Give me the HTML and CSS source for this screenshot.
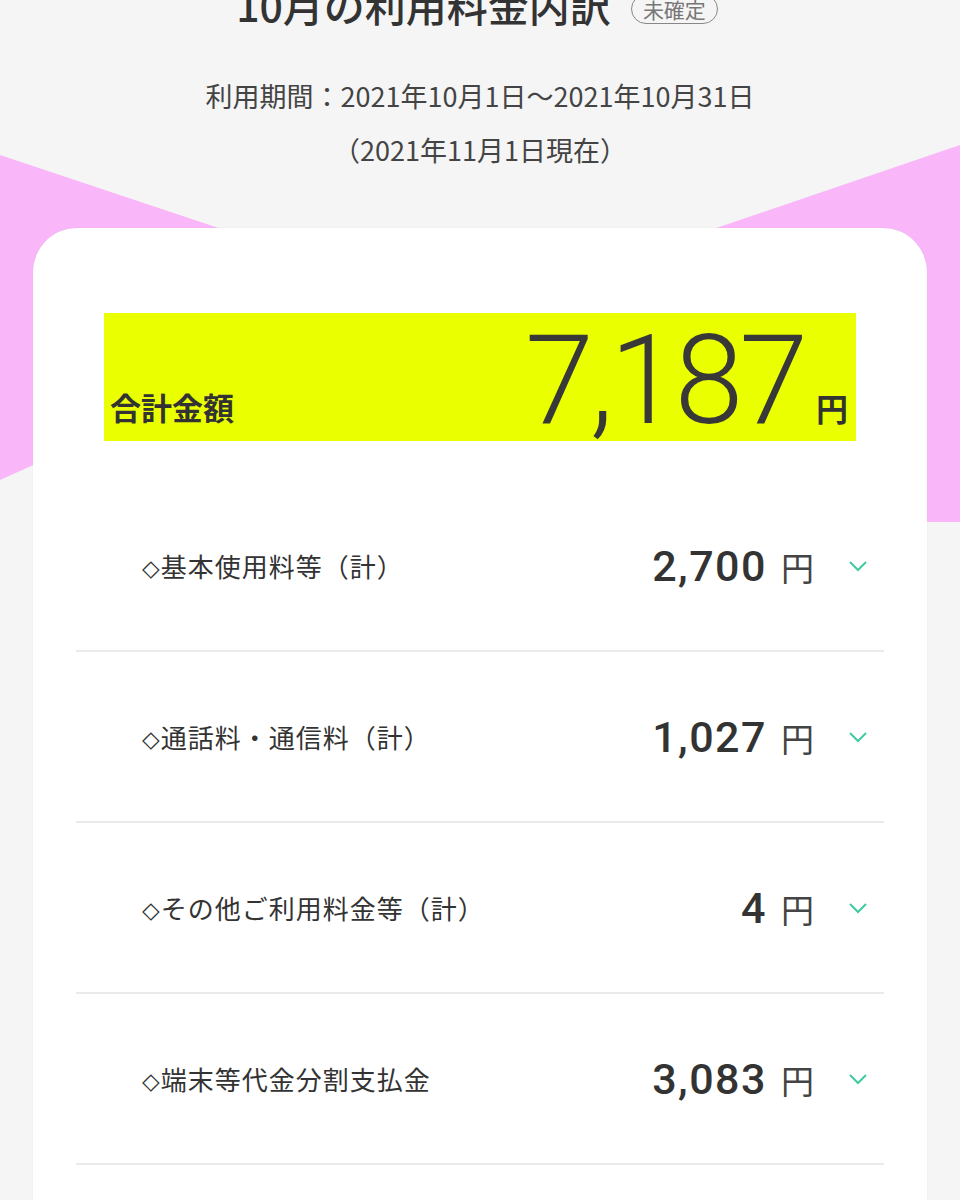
FILE: index.html
```html
<!DOCTYPE html>
<html lang="ja">
<head>
<meta charset="utf-8">
<link rel="stylesheet" href="styles.css">
</head>
<body>
<div class="page">
  <svg class="deco" width="960" height="1200" viewBox="0 0 960 1200" aria-hidden="true">
    <polygon points="0,155 470,312 960,145 960,522 930,522 40,462 0,480" fill="#f9b6f8"/>
  </svg>
  <header class="head">
    <h1 class="title">10月の利用料金内訳<span class="badge">未確定</span></h1>
    <p class="period">利用期間：2021年10月1日〜2021年10月31日</p>
    <p class="asof">（2021年11月1日現在）</p>
  </header>
  <main class="card">
    <div class="total">
      <span class="total-label">合計金額</span>
      <span class="total-amount"><span class="total-num">7,187</span><span class="total-yen">円</span></span>
    </div>
    <ul class="rows">
      <li class="row"><span class="label"><span class="dia">◇</span>基本使用料等（計）</span><span class="amt"><span class="num">2,700</span><span class="yen">円</span></span><svg class="chev" viewBox="0 0 20 12" width="20" height="12"><polyline points="2,2 10,10 18,2" fill="none" stroke="#3fcaa2" stroke-width="2"/></svg></li>
      <li class="row"><span class="label"><span class="dia">◇</span>通話料・通信料（計）</span><span class="amt"><span class="num">1,027</span><span class="yen">円</span></span><svg class="chev" viewBox="0 0 20 12" width="20" height="12"><polyline points="2,2 10,10 18,2" fill="none" stroke="#3fcaa2" stroke-width="2"/></svg></li>
      <li class="row"><span class="label"><span class="dia">◇</span>その他ご利用料金等（計）</span><span class="amt"><span class="num">4</span><span class="yen">円</span></span><svg class="chev" viewBox="0 0 20 12" width="20" height="12"><polyline points="2,2 10,10 18,2" fill="none" stroke="#3fcaa2" stroke-width="2"/></svg></li>
      <li class="row"><span class="label"><span class="dia">◇</span>端末等代金分割支払金</span><span class="amt"><span class="num">3,083</span><span class="yen">円</span></span><svg class="chev" viewBox="0 0 20 12" width="20" height="12"><polyline points="2,2 10,10 18,2" fill="none" stroke="#3fcaa2" stroke-width="2"/></svg></li>
      <li class="row empty"></li>
    </ul>
  </main>
</div>
</body>
</html>
```

FILE: styles.css
```css
* { box-sizing: border-box; }
html, body { margin: 0; padding: 0; }
body {
  background: #f5f5f5;
  font-family: "Noto Sans CJK JP", "Noto Sans", sans-serif;
  color: #333;
  width: 960px;
  height: 1200px;
  overflow: hidden;
}
.page { position: relative; width: 960px; display: flow-root; }
.deco { position: absolute; left: 0; top: 0; z-index: 0; }
.head { position: relative; z-index: 1; text-align: center; }
.title {
  margin: -24px 0 0;
  font-size: 41px;
  font-weight: 500;
  line-height: 56px;
  color: #333;
  padding-right: 6px;
}
.badge {
  display: inline-block;
  vertical-align: 4px;
  margin-left: 20px;
  font-size: 21px;
  font-weight: 400;
  line-height: 28px;
  color: #777;
  border: 1.5px solid #888;
  border-radius: 16px;
  padding: 0 11px;
}
.period {
  margin: 48px 0 0;
  font-size: 27px;
  line-height: 32px;
  color: #444;
}
.asof {
  margin: 22px 0 0;
  font-size: 27px;
  line-height: 32px;
  color: #444;
}
.card {
  position: relative;
  z-index: 1;
  margin: 62px 33px 0;
  background: #fff;
  border-radius: 44px 44px 0 0;
  padding: 85px 71px 0;
  height: 1000px;
  box-shadow: 0 0 2px rgba(0,0,0,0.06);
}
.total {
  background: #eaff00;
  height: 128px;
  display: flex;
  justify-content: space-between;
  align-items: flex-end;
  padding: 0 8px 16px 6px;
}
.total-label {
  font-size: 31px;
  font-weight: 700;
  line-height: 36px;
  color: #333;
}
.total-amount { display: flex; align-items: flex-end; }
.total-num {
  font-family: "Roboto", "Liberation Sans", sans-serif;
  font-weight: 300;
  font-size: 124px;
  line-height: 96px;
  letter-spacing: -4px;
  color: #383838;
  margin-right: 12px;
  margin-bottom: -4px;
}
.total-yen {
  font-size: 32px;
  font-weight: 700;
  line-height: 36px;
  color: #333;
}
.rows { list-style: none; margin: 40px -28px 0; padding: 0; }
.row {
  display: flex;
  align-items: center;
  height: 171px;
  border-bottom: 2px solid #ebebeb;
  padding: 0 16px 0 66px;
}
.row.empty { border-bottom: none; }
.label {
  flex: 1;
  font-size: 26px;
  letter-spacing: 1px;
  color: #333;
}
.dia {
  font-family: "DejaVu Sans", sans-serif;
  font-size: 23px;
  vertical-align: 1px;
}
.amt { display: flex; align-items: baseline; margin-right: 34px; }
.num {
  font-family: "Roboto", "Noto Sans", sans-serif;
  font-weight: 500;
  font-size: 43px;
  letter-spacing: 1.5px;
  color: #333;
}
.yen {
  font-size: 33px;
  font-weight: 400;
  color: #444;
  margin-left: 14px;
}
.chev { display: block; }
```
